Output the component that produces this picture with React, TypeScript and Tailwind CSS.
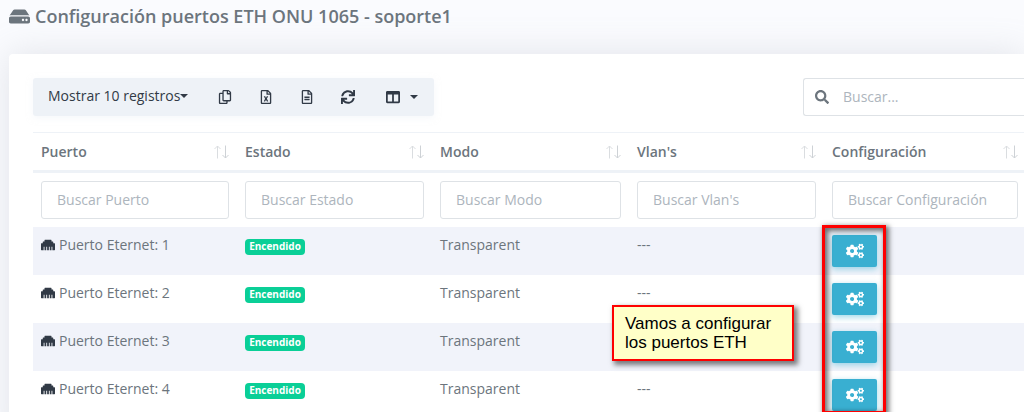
import type { ReactNode } from "react";
import {
  FaCogs,
  FaColumns,
  FaEthernet,
  FaHdd,
  FaRegCopy,
  FaRegFileAlt,
  FaRegFileExcel,
  FaSearch,
  FaSync,
} from "react-icons/fa";

const columns = [
  { name: "Puerto", width: "w-[204px]" },
  { name: "Estado", width: "w-[195px]" },
  { name: "Modo", width: "w-[197px]" },
  { name: "Vlan's", width: "w-[195px]" },
  { name: "Configuración", width: "" },
];

const ports = [
  { id: 1, vlans: "---" },
  { id: 2, vlans: "---" },
  { id: 3, vlans: "" },
  { id: 4, vlans: "---" },
];

function Caret() {
  return (
    <span className="inline-block border-x-4 border-t-4 border-x-transparent border-t-[#313a46]" />
  );
}

function SortArrows() {
  return (
    <svg width="15" height="14" viewBox="0 0 15 14" fill="none" strokeWidth="1" aria-hidden="true">
      <path d="M3.5 13.5V1M0.5 4L3.5 1L6.5 4" stroke="#dadde0" />
      <path d="M11.5 0.5V13M8.5 10L11.5 13L14.5 10" stroke="#ced2d6" />
    </svg>
  );
}

function ToolButton({ label, children }: { label: string; children: ReactNode }) {
  return (
    <button type="button" aria-label={label} className="flex h-full w-[41px] items-center justify-center">
      {children}
    </button>
  );
}

export default function App() {
  return (
    <div className="relative h-screen overflow-hidden bg-[#fafbfe] font-['Open_Sans',sans-serif] text-sm text-[#6c757d]">
      <h1 className="flex h-8 items-center gap-[5px] pl-[9px] text-lg font-semibold">
        <FaHdd className="h-[19px] w-[21px]" />
        Configuración puertos ETH ONU 1065 - soporte1
      </h1>

      <main className="mt-[22px] ml-[9px] rounded-tl bg-white pt-6 pb-6 pl-6 shadow-[0_0_35px_0_rgba(154,161,171,0.25)]">
        <div className="flex items-start justify-between">
          <div className="flex h-[38px] items-center rounded-[3px] bg-[#eef2f7] text-[#313a46] shadow-[0_2px_6px_0_rgba(238,242,247,0.5)]">
            <button type="button" className="flex h-full items-center pr-4 pb-0.5 pl-[15px]">
              Mostrar 10 registros <Caret />
            </button>
            <ToolButton label="Copiar"><FaRegCopy size={14} /></ToolButton>
            <ToolButton label="Excel"><FaRegFileExcel size={14} /></ToolButton>
            <ToolButton label="CSV"><FaRegFileAlt size={14} /></ToolButton>
            <ToolButton label="Recargar"><FaSync size={14} /></ToolButton>
            <button type="button" aria-label="Columnas" className="flex h-full items-center gap-2.5 pr-4 pl-[18px]">
              <FaColumns size={14} /> <Caret />
            </button>
          </div>
          <label className="flex h-[38px] w-[221px] items-center gap-3.5 rounded-l-[3px] border border-r-0 border-[#dee2e6] pl-[11px]">
            <FaSearch size={14} className="shrink-0" />
            <input
              type="search"
              aria-label="Buscar"
              placeholder="Buscar..."
              className="w-full min-w-0 bg-transparent outline-none placeholder:text-[#adb5bd]"
            />
          </label>
        </div>

        <table className="mt-4 w-full table-fixed border-collapse text-left">
          <thead>
            <tr className="h-[39px] border-t border-b-[3px] border-[#eef2f7]">
              {columns.map(({ name, width }) => (
                <th key={name} className={`${width} px-2 font-semibold last:pr-1.5`}>
                  <div className="flex items-center justify-between">
                    {name}
                    <SortArrows />
                  </div>
                </th>
              ))}
            </tr>
            <tr>
              {columns.map(({ name }) => (
                <th key={name} className="px-2 py-2 font-normal last:pr-1.5">
                  <input
                    type="text"
                    aria-label={`Buscar ${name}`}
                    placeholder={`Buscar ${name}`}
                    className="block h-[38px] w-full rounded-[3px] border border-[#dee2e6] px-[15px] pb-0.5 outline-none placeholder:text-[#adb5bd]"
                  />
                </th>
              ))}
            </tr>
          </thead>
          <tbody>
            {ports.map(({ id, vlans }) => (
              <tr key={id} className="h-12 align-top odd:bg-[#f1f3fa]">
                <td className="px-2 pt-2">
                  <span className="flex items-center gap-1">
                    <FaEthernet size={14} className="text-[#313a46]" />
                    Puerto Eternet: {id}
                  </span>
                </td>
                <td className="px-2 pt-3">
                  <span className="block w-[60px] rounded bg-[#0acf97] pb-0.5 text-center text-[10px] leading-[14px] font-bold text-white">
                    Encendido
                  </span>
                </td>
                <td className="px-2 pt-2">Transparent</td>
                <td className="px-2 pt-2">{vlans}</td>
                <td className="px-2 pt-2">
                  <button
                    type="button"
                    aria-label={`Configurar puerto ${id}`}
                    className="flex h-8 w-[45px] items-center justify-center rounded-[2px] bg-[#39afd1] text-white shadow-[0_2px_6px_0_rgba(57,175,209,0.5)]"
                  >
                    <FaCogs size={18} />
                  </button>
                </td>
              </tr>
            ))}
          </tbody>
        </table>
      </main>

      <div className="pointer-events-none absolute top-[225px] left-[822px] h-[189px] w-16 border-[3px] border-[#fe0000] shadow-[2px_2px_5px_1px_rgba(0,0,0,0.55),inset_2px_2px_5px_1px_rgba(0,0,0,0.55)]" />
      <p className="absolute top-[305px] left-[612px] w-[182px] border-2 border-[#fe0000] bg-[#ffffc8] py-[7px] pl-[11px] font-['Liberation_Sans',Arial,sans-serif] text-[17px] leading-[19px] text-black shadow-[3px_3px_5px_1px_rgba(0,0,0,0.5)]">
        Vamos a configurar los puertos ETH
      </p>
    </div>
  );
}
